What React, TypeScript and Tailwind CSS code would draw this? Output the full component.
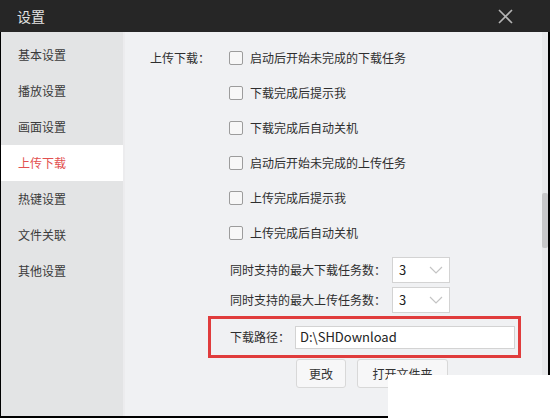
const navItems = ["基本设置", "播放设置", "画面设置", "上传下载", "热键设置", "文件关联", "其他设置"];

const options = [
  "启动后开始未完成的下载任务",
  "下载完成后提示我",
  "下载完成后自动关机",
  "启动后开始未完成的上传任务",
  "上传完成后提示我",
  "上传完成后自动关机",
];

const Checkbox = () => (
  <span className="w-[14px] h-[14px] border border-[#9c9c9c] rounded-[2px] bg-[#f7f7f7] shrink-0" />
);

const Select = ({ value }: { value: string }) => (
  <div className="w-[58px] h-[26px] bg-white border border-[#d3d3d3] flex items-center justify-between pl-[6px] pr-[6px] shrink-0">
    <span className="text-[13px] text-[#222]">{value}</span>
    <svg width="14" height="8" viewBox="0 0 14 8">
      <path d="M1 1 L7 7 L13 1" fill="none" stroke="#c4c4c4" strokeWidth="1.2" />
    </svg>
  </div>
);

export default function App() {
  const active = "上传下载";

  return (
    <div
      className="relative w-[550px] h-[418px] flex flex-col bg-black overflow-hidden"
      style={{ fontFamily: '"Noto Sans CJK SC", "Noto Sans", sans-serif' }}
    >
      {/* Title bar */}
      <div className="h-[32px] bg-[#262626] flex items-center justify-between pl-[17px] pr-[37px] shrink-0">
        <span className="text-[14px] text-[#e2e2e2]">设置</span>
        <svg width="15" height="15" viewBox="0 0 15 15">
          <path d="M1 1 L14 14 M14 1 L1 14" stroke="#b4b4b4" strokeWidth="1.6" />
        </svg>
      </div>

      <div className="flex flex-1 ml-[1px] mr-[2px] mb-[2px] min-h-0">
        {/* Sidebar */}
        <div className="w-[124px] bg-[#e3e4e5] border-r-2 border-[#ececee] pt-[5px] flex flex-col shrink-0">
          {navItems.map((item) => (
            <div
              key={item}
              className={`h-[36px] flex items-center pl-[17px] text-[12px] ${
                item === active ? "bg-white text-[#e25050]" : "text-[#3a3a3a]"
              }`}
            >
              {item}
            </div>
          ))}
        </div>

        {/* Content */}
        <div className="flex-1 bg-[#f0f1f3] flex">
          <div className="flex-1 pl-[25px] pt-[8px] text-[12px] text-[#2e2e2e] whitespace-nowrap">
            <div className="flex">
              <div className="w-[79px] h-[35px] flex items-center">上传下载：</div>
              <div className="flex flex-col">
                {options.map((opt) => (
                  <div key={opt} className="h-[35px] flex items-center gap-[7px]">
                    <Checkbox />
                    <span>{opt}</span>
                  </div>
                ))}
              </div>
            </div>

            <div className="ml-[80px] mt-[7px] flex flex-col gap-[4px]">
              <div className="flex items-center">
                <span className="w-[162px]">同时支持的最大下载任务数：</span>
                <Select value="3" />
              </div>
              <div className="flex items-center">
                <span className="w-[162px]">同时支持的最大上传任务数：</span>
                <Select value="3" />
              </div>
            </div>

            <div className="ml-[58px] mt-[3px] w-[313px] h-[42px] border-[3px] border-[#e03c3c] flex items-center pl-[19px]">
              <span className="w-[65px]">下载路径：</span>
              <div className="w-[220px] h-[23px] bg-white border border-[#d3d3d3] flex items-center pl-[4px] text-[13px] text-[#222]">
                D:\SHDownload
              </div>
            </div>

            <div className="ml-[146px] mt-[1px] flex gap-[11px]">
              <button className="w-[50px] h-[29px] bg-[#f7f7f8] border border-[#d8d8d8] rounded-[3px] text-[12px] text-[#333]">
                更改
              </button>
              <button className="w-[91px] h-[29px] bg-[#f7f7f8] border border-[#d8d8d8] rounded-[3px] text-[12px] text-[#333]">
                打开文件夹
              </button>
            </div>
          </div>

          {/* Scrollbar */}
          <div className="w-[6px] bg-[#e8e9eb] flex flex-col">
            <div className="mt-[161px] h-[55px] bg-[#c7c7c9] rounded-[2px]" />
          </div>
        </div>
      </div>

      {/* watermark patch */}
      <div className="absolute left-[388px] top-[375px] w-[162px] h-[43px] bg-white" />
    </div>
  );
}
